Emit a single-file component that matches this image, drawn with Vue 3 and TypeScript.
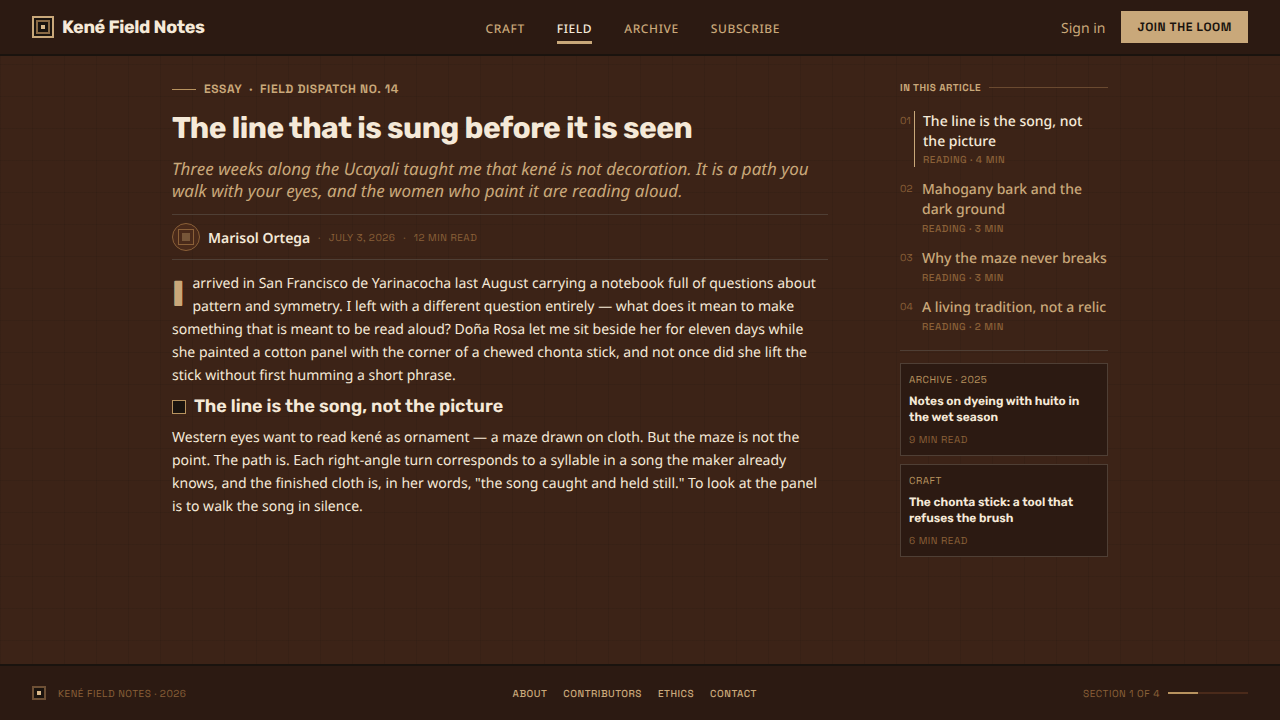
<script setup lang="ts">
interface NavLink {
  label: string
  active?: boolean
}

interface Section {
  number: string
  title: string
  minutes: number
  active?: boolean
}

interface Related {
  tag: string
  title: string
  minutes: number
}

const navLinks: NavLink[] = [
  { label: 'Craft' },
  { label: 'Field', active: true },
  { label: 'Archive' },
  { label: 'Subscribe' },
]

const sections: Section[] = [
  { number: '01', title: 'The line is the song, not the picture', minutes: 4, active: true },
  { number: '02', title: 'Mahogany bark and the dark ground', minutes: 3 },
  { number: '03', title: 'Why the maze never breaks', minutes: 3 },
  { number: '04', title: 'A living tradition, not a relic', minutes: 2 },
]

const related: Related[] = [
  { tag: 'Archive · 2025', title: 'Notes on dyeing with huito in the wet season', minutes: 9 },
  { tag: 'Craft', title: 'The chonta stick: a tool that refuses the brush', minutes: 6 },
]

const footerLinks: string[] = ['About', 'Contributors', 'Ethics', 'Contact']
</script>

<template>
  <div class="page">
    <header class="topbar">
      <a class="brand" href="#">
        <svg class="brand-mark" width="22" height="22" viewBox="0 0 22 22" aria-hidden="true">
          <rect x="1" y="1" width="20" height="20" fill="#1a130e" stroke="#c9a87a" stroke-width="2" />
          <rect x="5" y="5" width="12" height="12" fill="none" stroke="#8a6a45" stroke-width="2" />
          <rect x="9" y="9" width="4" height="4" fill="#d9b88a" />
        </svg>
        <span class="brand-name">Kené Field Notes</span>
      </a>
      <nav class="nav" aria-label="Primary">
        <a
          v-for="link in navLinks"
          :key="link.label"
          href="#"
          class="nav-link"
          :class="{ active: link.active }"
        >{{ link.label }}</a>
      </nav>
      <div class="actions">
        <a class="signin" href="#">Sign in</a>
        <button class="join" type="button">Join the loom</button>
      </div>
    </header>

    <main class="content">
      <article class="article">
        <p class="eyebrow"><span>Essay &nbsp;·&nbsp; Field dispatch no. 14</span></p>
        <h1 class="title">The line that is sung before it is seen</h1>
        <p class="lede">
          Three weeks along the Ucayali taught me that kené is not decoration. It is a path you
          walk with your eyes, and the women who paint it are reading aloud.
        </p>
        <div class="byline">
          <svg class="avatar" width="28" height="28" viewBox="0 0 28 28" aria-hidden="true">
            <circle cx="14" cy="14" r="13.5" fill="#4a2a1a" stroke="#8a6038" />
            <rect x="6.5" y="6.5" width="15" height="15" fill="none" stroke="#8a6038" />
            <rect x="10" y="10" width="8" height="8" fill="#775639" />
          </svg>
          <span class="author">Marisol Ortega</span>
          <span class="meta">·</span>
          <span class="meta">July 3, 2026</span>
          <span class="meta">·</span>
          <span class="meta">12 min read</span>
        </div>
        <p class="body opening">
          <span class="dropcap">I</span>arrived in San Francisco de Yarinacocha last August carrying a notebook full of questions about
          pattern and symmetry. I left with a different question entirely — what does it mean to make
          something that is meant to be read aloud? Doña Rosa let me sit beside her for eleven days while
          she painted a cotton panel with the corner of a chewed chonta stick, and not once did she lift the
          stick without first humming a short phrase.
        </p>
        <h2 class="subhead">The line is the song, not the picture</h2>
        <p class="body">
          Western eyes want to read kené as ornament — a maze drawn on cloth. But the maze is not the
          point. The path is. Each right-angle turn corresponds to a syllable in a song the maker already
          knows, and the finished cloth is, in her words, "the song caught and held still." To look at the panel
          is to walk the song in silence.
        </p>
      </article>

      <aside class="sidebar">
        <h2 class="side-head">In this article</h2>
        <ol class="toc">
          <li v-for="s in sections" :key="s.number">
            <a class="toc-item" :class="{ active: s.active }" href="#">
              <span class="toc-num">{{ s.number }}</span>
              <span class="toc-text">
                <span class="toc-title">{{ s.title }}</span>
                <span class="toc-meta">Reading · {{ s.minutes }} min</span>
              </span>
            </a>
          </li>
        </ol>
        <div class="related">
          <a v-for="r in related" :key="r.title" class="card" href="#">
            <span class="card-tag">{{ r.tag }}</span>
            <span class="card-title">{{ r.title }}</span>
            <span class="card-meta">{{ r.minutes }} min read</span>
          </a>
        </div>
      </aside>
    </main>

    <footer class="footer">
      <div class="foot-brand">
        <svg width="14" height="14" viewBox="0 0 14 14" aria-hidden="true">
          <rect x="1" y="1" width="12" height="12" fill="#1a130e" stroke="#6e5035" stroke-width="2" />
          <rect x="5" y="5" width="4" height="4" fill="#d9b88a" />
        </svg>
        <span>Kené Field Notes · 2026</span>
      </div>
      <nav class="foot-nav" aria-label="Footer">
        <a v-for="label in footerLinks" :key="label" href="#">{{ label }}</a>
      </nav>
      <div class="progress">
        <span>Section 1 of 4</span>
        <span class="track"><span class="fill"></span></span>
      </div>
    </footer>
  </div>
</template>

<style>
body {
  margin: 0;
  background: #3c2317;
}
</style>

<style scoped>
.page {
  --display: Rubik, Inter, sans-serif;
  --label: "Space Grotesk", Inter, sans-serif;
  --cream: #f5e9d8;
  --sand: #c9a87a;
  --ochre: #b8935f;
  --umber: #8a6038;
  --ink: #1a130e;
  --bark: #2c1a12;
  --rule: #4f3f35;
  min-height: 100vh;
  display: flex;
  flex-direction: column;
  font-family: "Noto Sans", sans-serif;
  text-rendering: geometricPrecision;
  color: var(--cream);
  background-color: #3c2317;
  background-image:
    repeating-linear-gradient(180deg, rgba(26, 19, 14, 0.12) 0 1px, transparent 1px 32px),
    repeating-linear-gradient(90deg, rgba(26, 19, 14, 0.12) 0 1px, transparent 1px 32px);
}

.page *,
.page *::before {
  box-sizing: border-box;
}

h1, h2, p, ol {
  margin: 0;
  padding: 0;
}

a {
  color: inherit;
  text-decoration: none;
}

.topbar {
  height: 56px;
  padding: 0 32px;
  display: flex;
  align-items: center;
  justify-content: space-between;
  background: var(--bark);
  border-bottom: 2px solid var(--ink);
}

.brand {
  display: flex;
  align-items: center;
  gap: 8px;
}

.brand-name {
  font: 700 18px/22px var(--display);
  letter-spacing: -0.02em;
}

.nav {
  display: flex;
  gap: 32px;
}

.nav-link {
  padding: 11px 0 4px;
  border-bottom: 3px solid transparent;
  color: var(--sand);
  font-size: 12px;
  font-weight: 500;
  line-height: 16px;
  letter-spacing: 0.05em;
  text-transform: uppercase;
}

.nav-link.active {
  color: var(--cream);
  border-bottom-color: var(--sand);
}

.actions {
  display: flex;
  align-items: center;
  gap: 16px;
}

.signin {
  padding-top: 3px;
  color: var(--sand);
  font-size: 14px;
  line-height: 20px;
}

.join {
  height: 32px;
  padding: 0 16px;
  border: 0;
  background: var(--sand);
  color: var(--ink);
  font: 600 12px/16px var(--label);
  letter-spacing: 0.05em;
  text-rendering: inherit;
  text-transform: uppercase;
}

.content {
  flex: 1;
  width: 100%;
  max-width: 1000px;
  margin: 0 auto;
  padding: 24px 32px;
  display: grid;
  grid-template-columns: minmax(0, 1fr) 208px;
  gap: 72px;
}

.eyebrow {
  display: flex;
  align-items: center;
  gap: 8px;
  margin-bottom: 12px;
  color: var(--sand);
  font: 600 12px/18px var(--label);
  letter-spacing: 0.05em;
  text-transform: uppercase;
}

.eyebrow::before {
  content: "";
  width: 24px;
  height: 1px;
  background: var(--ochre);
}

.title {
  font: 700 30px/36px var(--display);
  letter-spacing: -0.02em;
}

.lede {
  margin: 12px 0;
  color: var(--sand);
  font-size: 17px;
  font-style: italic;
  line-height: 22px;
}

.byline {
  display: flex;
  align-items: center;
  gap: 8px;
  padding: 8px 0;
  border-top: 1px solid var(--rule);
  border-bottom: 1px solid var(--rule);
}

.author {
  padding-top: 3px;
  font-size: 14px;
  font-weight: 600;
  line-height: 20px;
}

.meta {
  padding-top: 1px;
  color: var(--umber);
  font: 400 10px/15px var(--label);
  letter-spacing: 0.05em;
  text-transform: uppercase;
}

.body {
  font-size: 14px;
  line-height: 23px;
}

.opening {
  margin-top: 12px;
}

.dropcap {
  float: left;
  margin-right: 8px;
  color: var(--sand);
  font: 800 36px/44px var(--display);
}

.subhead {
  display: flex;
  align-items: center;
  gap: 8px;
  margin: 8px 0;
  font: 600 18px/23px var(--display);
}

.subhead::before {
  content: "";
  width: 14px;
  height: 14px;
  background: var(--ink);
  border: 1px solid var(--ochre);
}

.side-head {
  display: flex;
  align-items: center;
  gap: 8px;
  margin-bottom: 16px;
  color: var(--sand);
  font: 600 10px/15px var(--label);
  letter-spacing: 0.05em;
  text-transform: uppercase;
}

.side-head::after {
  content: "";
  flex: 1;
  height: 1px;
  background: #6b4a30;
}

.toc {
  display: flex;
  flex-direction: column;
  gap: 12px;
  padding-bottom: 16px;
  border-bottom: 1px solid var(--rule);
  list-style: none;
}

.toc-item {
  display: grid;
  grid-template-columns: 14px minmax(0, 1fr);
  gap: 8px;
}

.toc-num {
  padding-top: 3px;
  color: var(--umber);
  font: 400 10px/14px var(--label);
}

.toc-text {
  display: flex;
  flex-direction: column;
  gap: 2px;
  padding-top: 1px;
}

.toc-title {
  color: var(--sand);
  font-size: 14px;
  font-weight: 500;
  line-height: 20px;
}

.toc-item.active {
  gap: 0;
}

.active .toc-text {
  gap: 1px;
  padding-left: 8px;
  border-left: 1px solid var(--sand);
}

.active .toc-title {
  color: var(--cream);
}

.toc-meta {
  color: var(--umber);
  font: 500 10px/14px var(--label);
  letter-spacing: 0.05em;
  text-transform: uppercase;
}

.related {
  display: flex;
  flex-direction: column;
  gap: 8px;
  margin-top: 12px;
}

.card {
  display: flex;
  flex-direction: column;
  gap: 6px;
  padding: 8px;
  background: var(--bark);
  border: 1px solid var(--rule);
}

.card-tag,
.card-meta {
  font: 400 10px/15px var(--label);
  letter-spacing: 0.05em;
  text-transform: uppercase;
}

.card-tag {
  color: var(--ochre);
}

.card-meta {
  padding-top: 1px;
  color: var(--umber);
}

.card-title {
  font: 600 12px/16px var(--display);
}

.footer {
  height: 56px;
  padding: 0 32px;
  display: flex;
  align-items: center;
  justify-content: space-between;
  background: var(--bark);
  border-top: 2px solid var(--ink);
  color: var(--umber);
  font: 400 10px/15px var(--label);
  letter-spacing: 0.05em;
  text-transform: uppercase;
}

.foot-brand {
  display: flex;
  align-items: center;
  gap: 12px;
}

.foot-nav {
  display: flex;
  gap: 16px;
  color: var(--sand);
  font-weight: 500;
}

.progress {
  display: flex;
  align-items: center;
  gap: 8px;
}

.track {
  width: 80px;
  height: 2px;
  background: #4a2a1a;
}

.fill {
  display: block;
  width: 38%;
  height: 100%;
  background: var(--ochre);
}
</style>
